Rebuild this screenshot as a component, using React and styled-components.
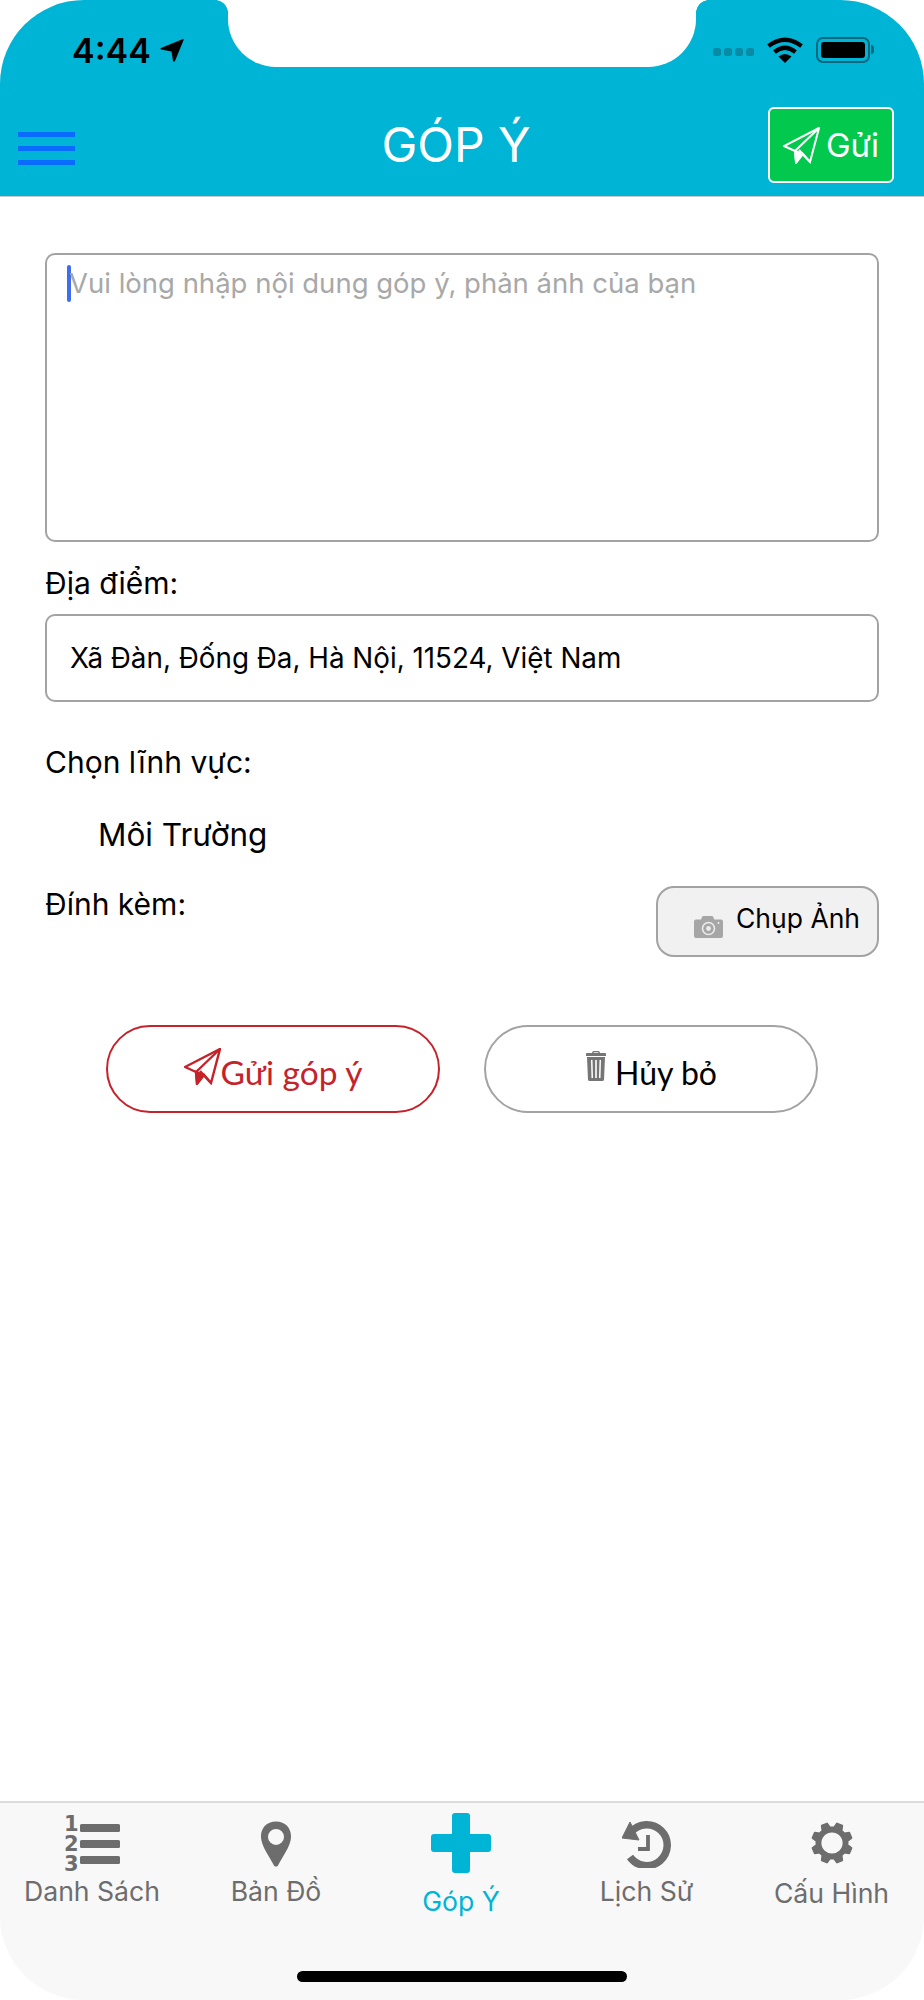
import React from "react";
import styled, { createGlobalStyle } from "styled-components";

const GlobalStyle = createGlobalStyle`
  html, body {
    margin: 0;
    padding: 0;
    background: #fff;
  }
  * {
    box-sizing: border-box;
  }
`;

const Sans = `Inter, "Liberation Sans", Arial, sans-serif`;
const Round = `Lato, "Open Sans", sans-serif`;
const Cyan = "#00b4d6";
const IconGrey = "#6d6d6d";

// 8 tooth cog, points worked out once when the file loads
const polar = (r, deg) => {
  const a = (deg * Math.PI) / 180;
  return `${(22 + r * Math.cos(a)).toFixed(2)} ${(22 + r * Math.sin(a)).toFixed(2)}`;
};
const gearOutline =
  Array.from({ length: 8 }, (_, k) => {
    const a = 22.5 + 45 * k;
    return `${k === 0 ? "M" : "L"}${polar(15.6, a - 15)} L${polar(20, a - 8)} L${polar(20, a + 8)} L${polar(15.6, a + 15)}`;
  }).join(" ") + " Z";

function PlaneIcon({ color = "#fff", width = 2 }) {
  return (
    <svg width="37" height="37" viewBox="-1 -1 37 37" fill="none" stroke={color} strokeWidth={width} strokeLinejoin="miter">
      <path d="M35 0 L0 18 L11 23 L12 35 L19 26 L26 34 Z" />
      <path d="M35 0 L11 23" />
      <path d="M11 23 L12 33 L18 25.5 Z" fill={color} />
      <path d="M15 22 L26 34" />
    </svg>
  );
}

function App() {
  return (
    <Page>
      <GlobalStyle />
      <Header>
        <Notch />
        <StatusBar>
          <Clock>
            4:44
            <svg width="24" height="24" viewBox="0 0 24 24" fill="#000">
              <path d="M23 1 Q24 0.5 23.6 2 L15 23 Q14 24.5 13 23 L11.5 13.5 L1 11.5 Q0 10.5 1 10 Z" />
            </svg>
          </Clock>
          <StatusRight>
            <Dots>
              <i /><i /><i /><i />
            </Dots>
            <svg width="36" height="26" viewBox="0 0 36 26" fill="none" stroke="#000" strokeWidth="4.2">
              <path d="M1.5 9 Q18 -3.5 34.5 9" />
              <path d="M7.5 15 Q18 6.5 28.5 15" />
              <path d="M18 26 L11.5 19.5 Q18 14.5 24.5 19.5 Z" fill="#000" stroke="none" />
            </svg>
            <Battery>
              <span />
            </Battery>
          </StatusRight>
        </StatusBar>
        <NavBar>
          <Menu>
            <i /><i /><i />
          </Menu>
          <Title>GÓP Ý</Title>
          <SendBox>
            <PlaneIcon />
            Gửi
          </SendBox>
        </NavBar>
      </Header>

      <Form>
        <Feedback>
          <Caret />
          Vui lòng nhập nội dung góp ý, phản ánh của bạn
        </Feedback>
        <Label>Địa điểm:</Label>
        <Address>Xã Đàn, Đống Đa, Hà Nội, 11524, Việt Nam</Address>
        <FieldLabel>Chọn lĩnh vực:</FieldLabel>
        <Category>Môi Trường</Category>
        <AttachRow>
          <AttachLabel>Đính kèm:</AttachLabel>
          <CameraButton>
            <svg width="29" height="22" viewBox="0 0 29 22" fill="#a6a6a6">
              <path d="M2 3.5 H7 L8 1 Q8.3 0 9.5 0 H17.5 Q19 0 19.3 1 L20.3 3.5 H27 Q29 3.5 29 5.5 V20 Q29 22 27 22 H2 Q0 22 0 20 V5.5 Q0 3.5 2 3.5 Z" />
              <circle cx="14.5" cy="12.5" r="6" fill="none" stroke="#ececec" strokeWidth="1.6" />
              <circle cx="14.5" cy="12.5" r="2.4" fill="#ececec" />
              <circle cx="24.5" cy="7" r="1" fill="#ececec" />
            </svg>
            Chụp Ảnh
          </CameraButton>
        </AttachRow>
        <Actions>
          <RoundButton $color="#c5232a" $size="33.5px">
            <PlaneIcon color="#c5232a" width={2.4} />
            Gửi góp ý
          </RoundButton>
          <RoundButton $color="#a3a3a3" $text="#000" $gap="8px">
            <svg width="22" height="32" viewBox="0 0 22 32" fill="#757575">
              <path d="M7 3 Q7 1 9 1 H13 Q15 1 15 3 H20 Q21 3 21 4 V6 H1 V4 Q1 3 2 3 Z M8.5 3 H13.5 Q13.5 2.2 12.5 2.2 H9.5 Q8.5 2.2 8.5 3 Z" fillRule="evenodd" />
              <path fillRule="evenodd" d="M2 7 H20 L19 30 Q19 31 17 31 H5 Q3 31 3 30 Z M6 10 L6.5 28 H8 L7.5 10 Z M10.2 10 V28 H11.8 V10 Z M14.5 10 L14 28 H15.5 L16 10 Z" />
            </svg>
            Hủy bỏ
          </RoundButton>
        </Actions>
      </Form>

      <TabBar>
        <Tab $top="15px">
          <TabIcon>
            <NumberedList>
              <Digits>
                <span>1</span>
                <span>2</span>
                <span>3</span>
              </Digits>
              <Bars>
                <i /><i /><i />
              </Bars>
            </NumberedList>
          </TabIcon>
          <TabLabel>Danh Sách</TabLabel>
        </Tab>
        <Tab $top="15px">
          <TabIcon>
            <svg width="32" height="48" viewBox="0 0 34 50" fill={IconGrey}>
              <path fillRule="evenodd" d="M17 1 C7 1 1 8 1 17 C1 27 11 40 15 48 Q17 50 19 48 C23 40 33 27 33 17 C33 8 27 1 17 1 Z M17 9 A8.5 8.5 0 1 1 17 26 A8.5 8.5 0 1 1 17 9 Z" />
            </svg>
          </TabIcon>
          <TabLabel>Bản Đồ</TabLabel>
        </Tab>
        <Tab $active $top="10px">
          <TabIcon $tall>
            <svg width="60" height="60" viewBox="0 0 60 60" fill={Cyan}>
              <rect x="21" y="0" width="18" height="60" rx="3" />
              <rect x="0" y="21" width="60" height="18" rx="3" />
            </svg>
          </TabIcon>
          <TabLabel $gap="12px">Góp Ý</TabLabel>
        </Tab>
        <Tab $top="15px">
          <TabIcon>
            <svg width="49" height="48" viewBox="0 0 49 48" fill="none" stroke={IconGrey}>
              <path d="M9 12 A20.5 20.5 0 1 1 8 37" strokeWidth="7.5" />
              <path d="M8 2 L0 18 L17 20 Z" fill={IconGrey} stroke={IconGrey} strokeWidth="1" strokeLinejoin="round" />
              <path d="M26 15 V29 H16" strokeWidth="3.8" />
            </svg>
          </TabIcon>
          <TabLabel>Lịch Sử</TabLabel>
        </Tab>
        <Tab $top="14px">
          <TabIcon>
            <svg width="44" height="44" viewBox="0 0 44 44" fill={IconGrey} stroke={IconGrey} strokeWidth="2" strokeLinejoin="round">
              <path fillRule="evenodd" d={`${gearOutline} M22 10.4 A11.6 11.6 0 1 0 22 33.6 A11.6 11.6 0 1 0 22 10.4 Z`} />
            </svg>
          </TabIcon>
          <TabLabel $gap="8px">Cấu Hình</TabLabel>
        </Tab>
        <HomeBar />
      </TabBar>
    </Page>
  );
}

export default App;

const Page = styled.div`
  position: relative;
  display: flex;
  flex-direction: column;
  width: 924px;
  height: 2000px;
  background: #fff;
  overflow: hidden;
  font-family: ${Sans};
`;

const Header = styled.header`
  position: relative;
  height: 197px;
  background: ${Cyan};
  border-bottom: 1px solid #c9c9c9;
  border-radius: 84px 84px 0 0;
`;

const Notch = styled.div`
  position: absolute;
  top: 0;
  left: 228px;
  width: 468px;
  height: 67px;
  background: #fff;
  border-radius: 0 0 48px 48px;

  &::before,
  &::after {
    content: "";
    position: absolute;
    top: 0;
    width: 13px;
    height: 13px;
  }

  &::before {
    left: -13px;
    background: radial-gradient(circle at 0 100%, ${Cyan} 12.6px, #fff 13.2px);
  }

  &::after {
    right: -13px;
    background: radial-gradient(circle at 100% 100%, ${Cyan} 12.6px, #fff 13.2px);
  }
`;

const StatusBar = styled.div`
  display: flex;
  justify-content: space-between;
  align-items: center;
  height: 100px;
  padding: 0 54px 0 72px;
`;

const Clock = styled.div`
  display: flex;
  align-items: center;
  gap: 9px;
  font-size: 34px;
  font-weight: 600;
  color: #000;
`;

const StatusRight = styled.div`
  display: flex;
  align-items: center;
  gap: 13px;
`;

const Dots = styled.div`
  display: flex;
  gap: 3px;
  margin-top: 3px;

  i {
    width: 8px;
    height: 8px;
    border-radius: 2.5px;
    background: #098aa5;
  }
`;

const Battery = styled.div`
  position: relative;
  width: 54px;
  height: 26px;
  padding: 3px;
  border: 2px solid #06687e;
  border-radius: 7px;

  span {
    display: block;
    height: 100%;
    background: #000;
    border-radius: 3px;
  }

  &::after {
    content: "";
    position: absolute;
    top: 6px;
    right: -6px;
    width: 3px;
    height: 9px;
    background: #06687e;
    border-radius: 0 3px 3px 0;
  }
`;

const NavBar = styled.div`
  display: grid;
  grid-template-columns: 1fr auto 1fr;
  align-items: center;
  padding: 7px 30px 0 18px;
`;

const Menu = styled.div`
  display: flex;
  flex-direction: column;
  gap: 9px;
  width: 57px;
  margin-top: 7px;

  i {
    height: 5px;
    background: #0a6cff;
  }
`;

const Title = styled.h1`
  margin: 0 0 2px;
  font-size: 48px;
  font-weight: 400;
  color: #fff;
`;

const SendBox = styled.div`
  display: flex;
  align-items: center;
  justify-content: center;
  justify-self: end;
  gap: 6px;
  width: 126px;
  height: 76px;
  background: #03c84e;
  border: 2px solid #fff;
  border-radius: 6px;
  font-size: 33px;
  color: #fff;
`;

const Form = styled.main`
  display: flex;
  flex-direction: column;
  flex: 1;
  padding: 56px 45px 0;
  color: #000;
`;

const Feedback = styled.div`
  display: flex;
  align-items: flex-start;
  height: 289px;
  padding: 10px 20px;
  border: 2px solid #a3a3a3;
  border-radius: 10px;
  font-size: 27.5px;
  line-height: 36px;
  color: #a8a8a8;
`;

const Caret = styled.span`
  width: 4px;
  height: 37px;
  background: #3f6df0;
  border-radius: 2px;
  margin-right: -2px;
`;

const Label = styled.div`
  margin-top: 23px;
  font-size: 30px;
  line-height: 36px;
`;

const FieldLabel = styled(Label)`
  margin-top: 42px;
`;

const Address = styled.div`
  display: flex;
  align-items: center;
  height: 88px;
  margin-top: 13px;
  padding: 0 23px;
  border: 2px solid #a3a3a3;
  border-radius: 10px;
  font-size: 27.8px;
`;

const Category = styled.div`
  margin-top: 36px;
  padding-left: 53px;
  font-size: 31.5px;
  line-height: 38px;
`;

const AttachRow = styled.div`
  display: flex;
  justify-content: space-between;
  align-items: flex-start;
  margin-top: 32px;
`;

const AttachLabel = styled.div`
  font-size: 30px;
  line-height: 36px;
`;

const CameraButton = styled.div`
  display: flex;
  align-items: center;
  gap: 13px;
  width: 223px;
  height: 71px;
  padding: 0 14px 8px 36px;
  background: #f1f1f1;
  border: 2px solid #a3a3a3;
  border-radius: 18px;
  font-size: 26.5px;
  white-space: nowrap;

  svg {
    margin-top: 19px;
    flex-shrink: 0;
  }
`;

const Actions = styled.div`
  display: flex;
  justify-content: center;
  gap: 44px;
  margin-top: 68px;
`;

const RoundButton = styled.div`
  display: flex;
  align-items: center;
  justify-content: center;
  gap: ${(p) => p.$gap || "0"};
  width: 334px;
  height: 88px;
  padding-top: 6px;
  border: 2px solid ${(p) => p.$color};
  border-radius: 44px;
  font-family: ${Round};
  font-size: ${(p) => p.$size || "32px"};
  color: ${(p) => p.$text || p.$color};

  svg {
    margin-bottom: 12px;
  }
`;

const TabBar = styled.nav`
  position: relative;
  display: grid;
  grid-template-columns: 184px 184px 186px 185px 185px;
  height: 199px;
  background: #f8f8f8;
  border-top: 2px solid #dcdcdc;
  border-radius: 0 0 84px 84px;
`;

const Tab = styled.div`
  display: flex;
  flex-direction: column;
  align-items: center;
  padding-top: ${(p) => p.$top};
`;

const TabIcon = styled.div`
  display: flex;
  align-items: center;
  justify-content: center;
  height: ${(p) => (p.$tall ? "60px" : "52px")};
`;

const NumberedList = styled.div`
  display: flex;
  align-items: center;
  gap: 3px;
  color: ${IconGrey};
`;

const Digits = styled.div`
  display: flex;
  flex-direction: column;
  font-family: "DejaVu Sans", sans-serif;
  font-size: 21px;
  font-weight: 700;
  line-height: 20px;
  width: 13px;
`;

const Bars = styled.div`
  display: flex;
  flex-direction: column;
  gap: 8px;

  i {
    display: block;
    width: 40px;
    height: 8px;
    background: ${IconGrey};
    border-radius: 1.5px;
  }
`;

const TabLabel = styled.div`
  margin-top: ${(p) => p.$gap || "5px"};
  font-size: 26.6px;
  color: ${(p) => (p.$gap === "12px" ? Cyan : IconGrey)};
  white-space: nowrap;
`;

const HomeBar = styled.div`
  position: absolute;
  left: 297px;
  bottom: 18px;
  width: 330px;
  height: 11px;
  background: #000;
  border-radius: 6px;
`;
